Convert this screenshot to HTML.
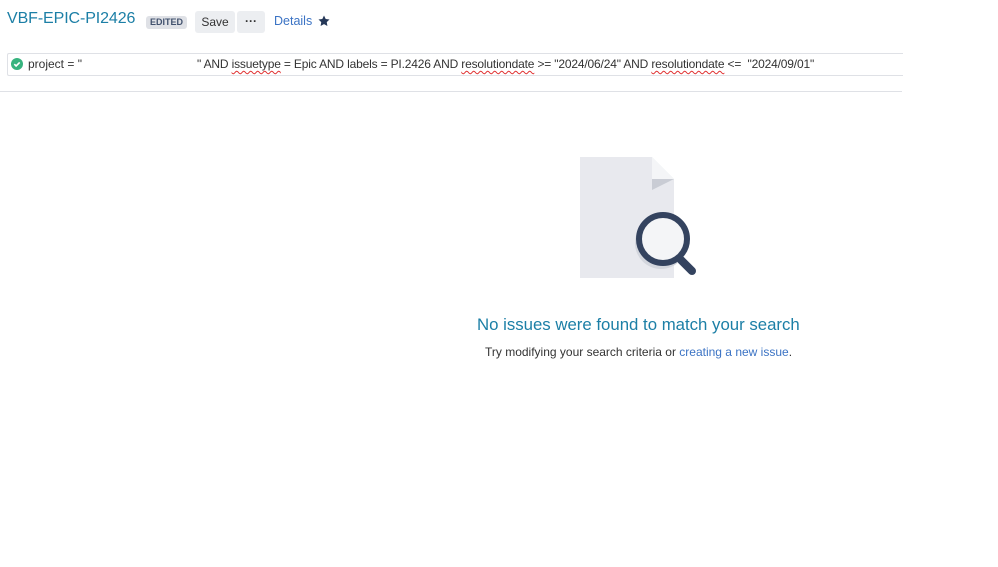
<!DOCTYPE html>
<html><head><meta charset="utf-8"><style>
body{margin:0;width:998px;height:567px;background:#fff;font-family:"Liberation Sans",sans-serif;position:relative;overflow:hidden;color:#333}
.abs{position:absolute;white-space:nowrap}
.sq{text-decoration:underline wavy #e03030;text-decoration-thickness:1px;text-underline-offset:2px}
</style></head><body>
<div class="abs" style="left:7px;top:10px;font-size:16px;color:#1c7fa6;letter-spacing:-0.1px">VBF-EPIC-PI2426</div>
<div class="abs" style="left:146px;top:16px;width:41px;height:13px;background:#dfe1e6;border-radius:3px;font-size:9px;font-weight:bold;color:#42526e;text-align:center;line-height:13px">EDITED</div>
<div class="abs" style="left:195px;top:11px;width:40px;height:22px;background:#eceef1;border-radius:3px;font-size:12px;color:#333;text-align:center;line-height:22px">Save</div>
<div class="abs" style="left:237px;top:11px;width:28px;height:22px;background:#eceef1;border-radius:3px;font-size:12px;font-weight:bold;color:#333;text-align:center;line-height:20px">···</div>
<div class="abs" style="left:274px;top:14px;font-size:12.5px;color:#3b73c4">Details</div>
<svg class="abs" style="left:318px;top:15px" width="12" height="12" viewBox="0 0 24 24"><path d="M12 1l3.4 7 7.6 1-5.5 5.3 1.3 7.7L12 18.3 5.2 22l1.3-7.7L1 9l7.6-1z" fill="#253858"/></svg>
<div class="abs" style="left:7px;top:53px;width:895px;height:21px;border:1px solid #dfe1e6;border-right:none;border-radius:2px 0 0 2px;background:#fff"></div>
<svg class="abs" style="left:11px;top:58px" width="12" height="12" viewBox="0 0 12 12"><circle cx="6" cy="6" r="6" fill="#36b37e"/><path d="M3.3 6.2l1.8 1.8 3.6-3.6" stroke="#fff" stroke-width="1.6" fill="none"/></svg>
<div class="abs" style="left:28px;top:57px;font-size:12px;color:#333">project = "</div>
<div class="abs" style="left:197px;top:57px;font-size:12px;color:#333;letter-spacing:-0.17px">" AND <span class="sq">issuetype</span> = Epic AND labels = PI.2426 AND <span class="sq">resolutiondate</span> &gt;= "2024/06/24" AND <span class="sq">resolutiondate</span> &lt;=&nbsp; "2024/09/01"</div>
<div class="abs" style="left:0;top:91px;width:902px;height:1px;background:#dfe1e6"></div>
<svg class="abs" style="left:575px;top:150px" width="130" height="135" viewBox="575 150 130 135">
<path d="M580 157H652L674 179V278H580Z" fill="#e8e9ee"/>
<path d="M652 157L674 179H652Z" fill="#f4f5f7"/>
<path d="M652 179L674 179L652 190Z" fill="#c9ccd4"/>
<circle cx="661" cy="243" r="26" fill="#d3d6dd"/>
<line x1="681" y1="260" x2="692" y2="271" stroke="#34435f" stroke-width="8" stroke-linecap="round"/>
<circle cx="663" cy="239" r="24" fill="#f4f5f7" stroke="#34435f" stroke-width="6"/>
</svg>
<div class="abs" style="left:477px;top:315px;font-size:16.8px;color:#1c7fa6">No issues were found to match your search</div>
<div class="abs" style="left:485px;top:345px;font-size:12px;color:#333">Try modifying your search criteria or <span style="color:#3b73c4">creating a new issue</span>.</div>
</body></html>
